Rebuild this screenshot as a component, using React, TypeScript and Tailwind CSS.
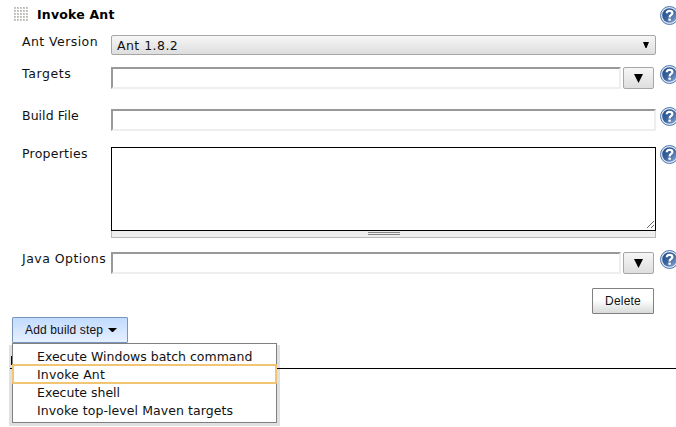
import type { ReactNode } from "react";

function HelpIcon({ className = "" }: { className?: string }) {
  return (
    <svg className={`h-5 w-5 shrink-0 ${className}`} viewBox="0 0 20 20">
      <defs>
        <linearGradient id="helpFill" x1="0" y1="0" x2="1" y2="1">
          <stop offset="0" stopColor="#1f4a86" />
          <stop offset="0.5" stopColor="#3b659f" />
          <stop offset="1" stopColor="#8fb0da" />
        </linearGradient>
      </defs>
      <circle cx="9.5" cy="9.5" r="9" fill="#dde7f3" stroke="#4d76ad" strokeWidth="1" />
      <circle cx="9.5" cy="9.5" r="7.3" fill="url(#helpFill)" />
      <path d="M6.7 7.3C6.8 5.6 7.8 4.8 9.4 4.8C11.3 4.8 12.4 5.7 12.4 7C12.4 8.9 9.6 8.9 9.6 11.4" fill="none" stroke="#fff" strokeWidth="2.2" />
      <rect x="8.4" y="12.6" width="2.4" height="2.2" fill="#fff" />
    </svg>
  );
}

function Row({ label, height, tracking, help = true, children }: { label: string; height: string; tracking: string; help?: boolean; children: ReactNode }) {
  return (
    <div className={`flex w-[680px] items-start ${height}`}>
      <div className={`-mt-px w-[111px] shrink-0 pl-[22px] leading-4 whitespace-nowrap ${tracking}`}>{label}</div>
      <div className="flex w-[545px] shrink-0 gap-[2px]">{children}</div>
      {help && <HelpIcon className="-mt-[2px] ml-1" />}
    </div>
  );
}

function TextField({ width }: { width: string }) {
  return <div className={`h-[22px] border-2 border-t-[#999] border-l-[#999] border-r-[#eee] border-b-[#eee] bg-white ${width}`} />;
}

function DropButton() {
  return (
    <div className="flex h-[22px] w-[31px] items-center justify-center rounded-[2px] border border-[#a6a6a6] bg-linear-to-b from-[#f6f6f6] to-[#dedede]">
      <svg className="h-[9px] w-[9px]" viewBox="0 0 9 9"><path d="M0 0H9L4.5 9Z" /></svg>
    </div>
  );
}

const steps = [
  { name: "Execute Windows batch command", tracking: "tracking-[0px]" },
  { name: "Invoke Ant", tracking: "tracking-[0.15px]" },
  { name: "Execute shell", tracking: "tracking-[0px]" },
  { name: "Invoke top-level Maven targets", tracking: "tracking-[0.08px]" },
];

export default function App() {
  return (
    <div className="h-[427px] w-[676px] overflow-hidden bg-white font-['DejaVu_Sans',sans-serif] text-[12.5px] text-[#111]">
      <div className="flex h-[35px] w-[680px] items-start">
        <svg className="mt-[7px] ml-[14px] h-[14px] w-[14px] shrink-0" viewBox="0 0 14 14" shapeRendering="crispEdges">
          {[0, 3, 6, 9, 12].map((y) => [0, 3, 6, 9, 12].map((x) => (
            <g key={`${x}-${y}`}>
              <rect x={x} y={y} width="2" height="2" fill="#cbcbc6" />
              <rect x={x} y={y} width="1" height="1" fill="#b5b4ae" />
            </g>
          )))}
        </svg>
        <div className="mt-[7px] ml-[9px] flex-1 leading-4 font-bold tracking-[0.2px] text-black">Invoke Ant</div>
        <HelpIcon className="mt-[6px]" />
      </div>

      <Row label="Ant Version" height="h-8" tracking="tracking-[0.43px]" help={false}>
        <div className="flex h-5 w-[545px] items-center justify-between rounded-[2px] border border-[#a6a6a6] bg-linear-to-b from-[#f6f6f6] to-[#dedede] pr-[6px] pl-[5px]">
          <span className="mt-px leading-4 tracking-[0.45px]">Ant 1.8.2</span>
          <svg className="mb-[1px] h-[6px] w-[6px]" viewBox="0 0 6 6"><path d="M0 0H6L3.5 6H2.5Z" /></svg>
        </div>
      </Row>
      <Row label="Targets" height="h-[42px]" tracking="tracking-[0.6px]">
        <TextField width="w-[510px]" />
        <DropButton />
      </Row>
      <Row label="Build File" height="h-[38px]" tracking="tracking-[0.05px]">
        <TextField width="w-[545px]" />
      </Row>
      <Row label="Properties" height="h-[105px]" tracking="tracking-[0.25px]">
        <div className="w-[545px]">
          <div className="flex h-[84px] items-end justify-end border border-black p-[1px]">
            <svg className="h-[8px] w-[8px]" viewBox="0 0 8 8" shapeRendering="crispEdges">
              <path d="M0.5 7.5L7.5 0.5M4.5 7.5L7.5 4.5" stroke="#666" fill="none" />
            </svg>
          </div>
          <div className="flex h-[7px] justify-center border-x border-b border-[#b8b8b4] bg-[#eee] pt-[1px]">
            <div className="h-[3px] w-8 border-y border-[#888]" />
          </div>
        </div>
      </Row>
      <Row label="Java Options" height="h-9" tracking="tracking-[0.47px]">
        <TextField width="w-[510px]" />
        <DropButton />
      </Row>

      <div className="flex h-[29px] pl-[592px] font-['Liberation_Sans',Arial,sans-serif] text-xs">
        <div className="flex h-[26px] w-[62px] items-center justify-center rounded-[1px] border border-[#808080] bg-linear-to-b from-white from-45% to-[#d8dada] tracking-[0.2px]">Delete</div>
      </div>

      <div className="relative ml-3 h-[26px] w-[116px]">
        <div className="flex h-[26px] items-center gap-[5px] rounded-[1px] border border-[#7896ba] bg-linear-to-b from-[#c2dbff] to-[#e6f0ff] pl-3 font-['Liberation_Sans',Arial,sans-serif] text-xs tracking-[0.15px]">
          <span className="whitespace-nowrap">Add build step</span>
          <svg className="h-[4px] w-[9px]" viewBox="0 0 9 4"><path d="M0 0H9L5 4H4Z" /></svg>
        </div>
        <div className="absolute top-[28px] -left-[3px] h-[81px] w-[271px] bg-[#e0e0e0]" />
        <div className="absolute top-[39px] -left-[1px] h-[9px] w-px bg-black" />
        <div className="absolute top-[51px] -left-[2px] h-px w-[666px] bg-black" />
        <div className="absolute top-[26px] left-0 h-[80px] w-[265px] border border-[#808080] bg-white pt-[3px]">
          {steps.map((step, i) => (
            <div key={step.name} className={`-mx-px whitespace-nowrap ${step.tracking} ${i === 1 ? "-my-px h-5 rounded-[1px] border-2 border-[#f2c575] pl-[23px] leading-[18px]" : "h-[18px] pl-[25px] leading-5"}`}>{step.name}</div>
          ))}
        </div>
      </div>
    </div>
  );
}
